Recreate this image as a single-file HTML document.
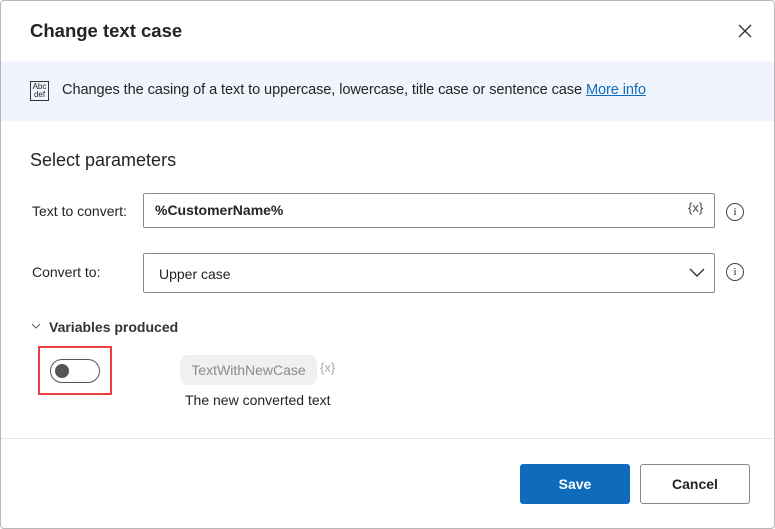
<!DOCTYPE html>
<html><head><style>
*{box-sizing:border-box;margin:0;padding:0}
body{width:775px;height:529px;background:#fff;font-family:"Liberation Sans",sans-serif;color:#242424;position:relative;overflow:hidden}
.frame{position:absolute;left:0;top:0;width:775px;height:529px;border:1px solid #b8b8b8;border-radius:4px}
.a{position:absolute}
.input{position:absolute;border:1px solid #8a8a8a;border-radius:2px;background:#fff;height:35px}
.info{position:absolute;width:18px;height:18px;border:1.3px solid #444;border-radius:50%;font-size:11px;text-align:center;line-height:16px;font-family:"Liberation Serif",serif}
</style></head><body>
<div class="frame"></div>
<div class="a" style="left:30px;top:20px;font-size:18.5px;font-weight:bold;color:#242424">Change text case</div>
<svg class="a" style="left:738px;top:24px" width="14" height="14"><path d="M1 1L13 13M13 1L1 13" stroke="#333" stroke-width="1.4"/></svg>
<div class="a" style="left:1px;top:61px;width:773px;height:60px;background:#f0f5fd"></div>
<div class="a" style="left:30px;top:81px;width:19px;height:20px;border:1px solid #333;font-size:8px;line-height:8px;text-align:center;padding-top:1px">Abc<br>def</div>
<div class="a" style="left:62px;top:82px;font-size:14.6px;letter-spacing:-0.1px">Changes the casing of a text to uppercase, lowercase, title case or sentence case <span style="color:#0f6cbd;text-decoration:underline">More info</span></div>
<div class="a" style="left:30px;top:150px;font-size:18px">Select parameters</div>
<div class="a" style="left:32px;top:203px;font-size:14px">Text to convert:</div>
<div class="input" style="left:143px;top:193px;width:572px"></div>
<div class="a" style="left:155px;top:202px;font-size:14px;font-weight:bold">%CustomerName%</div>
<div class="a" style="left:688px;top:200px;font-size:13px;color:#444">{x}</div>
<div class="info" style="left:726px;top:203px">i</div>
<div class="a" style="left:32px;top:264px;font-size:14px">Convert to:</div>
<div class="input" style="left:143px;top:253px;width:572px;height:40px"></div>
<div class="a" style="left:159px;top:266px;font-size:14px">Upper case</div>
<svg class="a" style="left:689px;top:268px" width="16" height="10"><path d="M1 1L8 8L15 1" stroke="#333" stroke-width="1.4" fill="none"/></svg>
<div class="info" style="left:726px;top:263px">i</div>
<svg class="a" style="left:31px;top:323px" width="10" height="7"><path d="M1 1L5 5L9 1" stroke="#666" stroke-width="1.1" fill="none"/></svg>
<div class="a" style="left:49px;top:319px;font-size:14px;font-weight:bold;color:#333">Variables produced</div>
<div class="a" style="left:38px;top:346px;width:74px;height:49px;border:2px solid #e8413f"></div>
<div class="a" style="left:50px;top:359px;width:50px;height:24px;border:1px solid #555;border-radius:12px"></div>
<div class="a" style="left:55px;top:364px;width:14px;height:14px;border-radius:50%;background:#555"></div>
<div class="a" style="left:180px;top:355px;width:137px;height:30px;background:#f0f0f0;border-radius:8px;font-size:14px;color:#8a8a8a;line-height:30px;text-align:center">TextWithNewCase</div>
<div class="a" style="left:320px;top:360px;font-size:13px;color:#aaa">{x}</div>
<div class="a" style="left:185px;top:392px;font-size:14px">The new converted text</div>
<div class="a" style="left:1px;top:438px;width:773px;height:1px;background:#e6e6e6"></div>
<div class="a" style="left:520px;top:464px;width:110px;height:40px;background:#0f6cbd;border-radius:3px;color:#fff;font-weight:bold;font-size:14px;text-align:center;line-height:40px">Save</div>
<div class="a" style="left:640px;top:464px;width:110px;height:40px;border:1px solid #8a8a8a;border-radius:3px;font-weight:bold;font-size:14px;text-align:center;line-height:38px">Cancel</div>
</body></html>
